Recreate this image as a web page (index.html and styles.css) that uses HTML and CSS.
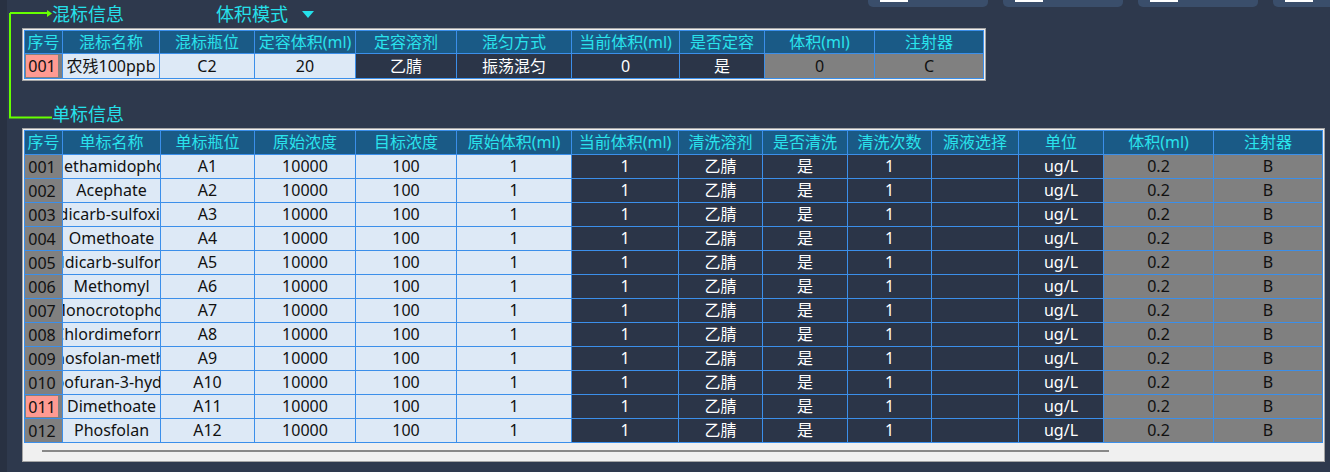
FILE: index.html
```html
<!DOCTYPE html>
<html lang="zh-CN">
<head>
  <meta charset="UTF-8"/>
  <title>混标信息</title>
  <link rel="stylesheet" href="styles.css">
</head>
<body>
  <div class="page">
    <div class="head">
      <div class="titles">
        <span class="title">混标信息</span>
        <span class="mode">体积模式<i class="caret"></i></span>
      </div>
      <div class="tools">
        <div class="tool"><span></span></div>
        <div class="tool"><span></span></div>
        <div class="tool"><span></span></div>
        <div class="tool"><span></span></div>
      </div>
    </div>

    <svg class="link" width="46" height="112" viewBox="0 0 46 112">
      <path d="M1 3 V107.5 M0 107.5 H43 M1 3 H39" stroke="#66ff00" stroke-width="2" fill="none"/>
      <polygon points="38,0 43,3.5 38,7" fill="#66ff00"/>
    </svg>

    <!-- mix table -->
    <div class="frame">
      <div class="grid mix">
        <div class="c h">序号</div><div class="c h">混标名称</div><div class="c h">混标瓶位</div><div class="c h">定容体积(ml)</div><div class="c h">定容溶剂</div><div class="c h">混匀方式</div><div class="c h">当前体积(ml)</div><div class="c h">是否定容</div><div class="c h">体积(ml)</div><div class="c h">注射器</div>
        <div class="c g"><span class="no">001</span></div><div class="c l"><span>农残100ppb</span></div><div class="c l">C2</div><div class="c l">20</div><div class="c d">乙腈</div><div class="c d">振荡混匀</div><div class="c d">0</div><div class="c d">是</div><div class="c g">0</div><div class="c g">C</div>
      </div>
    </div>

    <div class="sub"><span class="title">单标信息</span></div>

    <!-- single table -->
    <div class="frame">
      <div class="grid single">
        <div class="c h">序号</div><div class="c h">单标名称</div><div class="c h">单标瓶位</div><div class="c h">原始浓度</div><div class="c h">目标浓度</div><div class="c h">原始体积(ml)</div><div class="c h">当前体积(ml)</div><div class="c h">清洗溶剂</div><div class="c h">是否清洗</div><div class="c h">清洗次数</div><div class="c h">源液选择</div><div class="c h">单位</div><div class="c h">体积(ml)</div><div class="c h">注射器</div>

        <div class="c g"><span class="idx">001</span></div><div class="c l"><span>Methamidophos</span></div><div class="c l">A1</div><div class="c l">10000</div><div class="c l">100</div><div class="c l">1</div><div class="c d">1</div><div class="c d">乙腈</div><div class="c d">是</div><div class="c d">1</div><div class="c d"></div><div class="c d">ug/L</div><div class="c g">0.2</div><div class="c g">B</div>
        <div class="c g"><span class="idx">002</span></div><div class="c l"><span>Acephate</span></div><div class="c l">A2</div><div class="c l">10000</div><div class="c l">100</div><div class="c l">1</div><div class="c d">1</div><div class="c d">乙腈</div><div class="c d">是</div><div class="c d">1</div><div class="c d"></div><div class="c d">ug/L</div><div class="c g">0.2</div><div class="c g">B</div>
        <div class="c g"><span class="idx">003</span></div><div class="c l"><span>Aldicarb-sulfoxide</span></div><div class="c l">A3</div><div class="c l">10000</div><div class="c l">100</div><div class="c l">1</div><div class="c d">1</div><div class="c d">乙腈</div><div class="c d">是</div><div class="c d">1</div><div class="c d"></div><div class="c d">ug/L</div><div class="c g">0.2</div><div class="c g">B</div>
        <div class="c g"><span class="idx">004</span></div><div class="c l"><span>Omethoate</span></div><div class="c l">A4</div><div class="c l">10000</div><div class="c l">100</div><div class="c l">1</div><div class="c d">1</div><div class="c d">乙腈</div><div class="c d">是</div><div class="c d">1</div><div class="c d"></div><div class="c d">ug/L</div><div class="c g">0.2</div><div class="c g">B</div>
        <div class="c g"><span class="idx">005</span></div><div class="c l"><span>Aldicarb-sulfone</span></div><div class="c l">A5</div><div class="c l">10000</div><div class="c l">100</div><div class="c l">1</div><div class="c d">1</div><div class="c d">乙腈</div><div class="c d">是</div><div class="c d">1</div><div class="c d"></div><div class="c d">ug/L</div><div class="c g">0.2</div><div class="c g">B</div>
        <div class="c g"><span class="idx">006</span></div><div class="c l"><span>Methomyl</span></div><div class="c l">A6</div><div class="c l">10000</div><div class="c l">100</div><div class="c l">1</div><div class="c d">1</div><div class="c d">乙腈</div><div class="c d">是</div><div class="c d">1</div><div class="c d"></div><div class="c d">ug/L</div><div class="c g">0.2</div><div class="c g">B</div>
        <div class="c g"><span class="idx">007</span></div><div class="c l"><span>Monocrotophos</span></div><div class="c l">A7</div><div class="c l">10000</div><div class="c l">100</div><div class="c l">1</div><div class="c d">1</div><div class="c d">乙腈</div><div class="c d">是</div><div class="c d">1</div><div class="c d"></div><div class="c d">ug/L</div><div class="c g">0.2</div><div class="c g">B</div>
        <div class="c g"><span class="idx">008</span></div><div class="c l"><span>Chlordimeform</span></div><div class="c l">A8</div><div class="c l">10000</div><div class="c l">100</div><div class="c l">1</div><div class="c d">1</div><div class="c d">乙腈</div><div class="c d">是</div><div class="c d">1</div><div class="c d"></div><div class="c d">ug/L</div><div class="c g">0.2</div><div class="c g">B</div>
        <div class="c g"><span class="idx">009</span></div><div class="c l"><span>Phosfolan-methyl</span></div><div class="c l">A9</div><div class="c l">10000</div><div class="c l">100</div><div class="c l">1</div><div class="c d">1</div><div class="c d">乙腈</div><div class="c d">是</div><div class="c d">1</div><div class="c d"></div><div class="c d">ug/L</div><div class="c g">0.2</div><div class="c g">B</div>
        <div class="c g"><span class="idx">010</span></div><div class="c l"><span>Carbofuran-3-hydroxy</span></div><div class="c l">A10</div><div class="c l">10000</div><div class="c l">100</div><div class="c l">1</div><div class="c d">1</div><div class="c d">乙腈</div><div class="c d">是</div><div class="c d">1</div><div class="c d"></div><div class="c d">ug/L</div><div class="c g">0.2</div><div class="c g">B</div>
        <div class="c g"><span class="no">011</span></div><div class="c l"><span>Dimethoate</span></div><div class="c l">A11</div><div class="c l">10000</div><div class="c l">100</div><div class="c l">1</div><div class="c d">1</div><div class="c d">乙腈</div><div class="c d">是</div><div class="c d">1</div><div class="c d"></div><div class="c d">ug/L</div><div class="c g">0.2</div><div class="c g">B</div>
        <div class="c g"><span class="idx">012</span></div><div class="c l"><span>Phosfolan</span></div><div class="c l">A12</div><div class="c l">10000</div><div class="c l">100</div><div class="c l">1</div><div class="c d">1</div><div class="c d">乙腈</div><div class="c d">是</div><div class="c d">1</div><div class="c d"></div><div class="c d">ug/L</div><div class="c g">0.2</div><div class="c g">B</div>
      </div>
      <div class="hscroll"><div class="thumb"></div></div>
    </div>
  </div>
</body>
</html>
```

FILE: styles.css
```css
/* Page */
html, body { height:100%; }
body {
  margin:0;
  background:#2e394d;
  border-left:7px solid #283142;
  font-family:"Noto Sans","Noto Sans CJK SC",sans-serif;
  font-size:16px;
  overflow:hidden;
}
.page { position:relative; }

/* Titles + toolbar */
.head { display:flex; align-items:flex-start; height:28px; }
.titles { width:861px; flex-shrink:0; display:flex; align-items:flex-start; padding-top:2px; }
.title {
  margin-left:45px;
  font-size:18px; line-height:22px; color:#25e0ea;
  font-family:"Noto Sans CJK SC",sans-serif;
}
.mode {
  margin-left:92px;
  font-size:18px; line-height:22px; color:#25e0ea;
  font-family:"Noto Sans CJK SC",sans-serif;
  display:flex; align-items:center;
}
.caret {
  display:inline-block; margin-left:14px; margin-top:2px;
  width:0; height:0;
  border-left:6.5px solid transparent; border-right:6.5px solid transparent;
  border-top:7px solid #25e0ea;
}
.tools { display:flex; gap:15px; flex-shrink:0; }
.tool {
  width:120px; height:7px;
  background:#3a4e6b; border-radius:0 0 5px 5px;
}
.tool span { display:block; margin-left:12px; width:28px; height:2px; background:#fff; }

.link { position:absolute; left:2px; top:10px; }

.sub { height:47px; padding-top:21px; box-sizing:border-box; }
.sub .title { display:block; }

/* Tables */
.frame {
  margin-left:15px;
  width:max-content;
  border:1px solid #a4a4a4;
  padding:1px;
  background:#f0f0f0;
}
.grid {
  display:grid; gap:1px; padding:1px;
  background:#3b8fea;
}
.mix { grid-template-columns:37px 96px 94px 100px 100px 114px 107px 84px 109px 108px; grid-template-rows:22px 24px; }
.single { grid-template-columns:37px 97px 93px 100px 100px 114px 106px 83px 84px 83px 86px 84px 109px 108px; grid-auto-rows:23px; }

.c {
  display:flex; align-items:center; justify-content:center;
  overflow:hidden; white-space:nowrap;
  line-height:22px; padding-bottom:1px; box-sizing:border-box;
}
.c span { flex-shrink:0; }
.h { background:#1a5a86; color:#29e3ec; }
.l { background:#dde9f6; color:#111; }
.d { background:#2b3548; color:#fff; }
.g { background:#808080; color:#111; }
.g:first-child, .g:nth-child(14n+1) { justify-content:flex-start; }
.mix .g { justify-content:center; }
.mix .g:nth-child(11) { justify-content:flex-start; }

.no, .idx {
  align-self:stretch;
  margin:1px 4px 0 1px;
  width:32px;
  display:flex; align-items:center; justify-content:center;
}
.no { background:#ff9a92; }

.hscroll { height:17px; background:#f0f0f0; padding-top:7px; box-sizing:border-box; }
.thumb { margin-left:18px; width:1067px; height:2px; background:#888; }
```
